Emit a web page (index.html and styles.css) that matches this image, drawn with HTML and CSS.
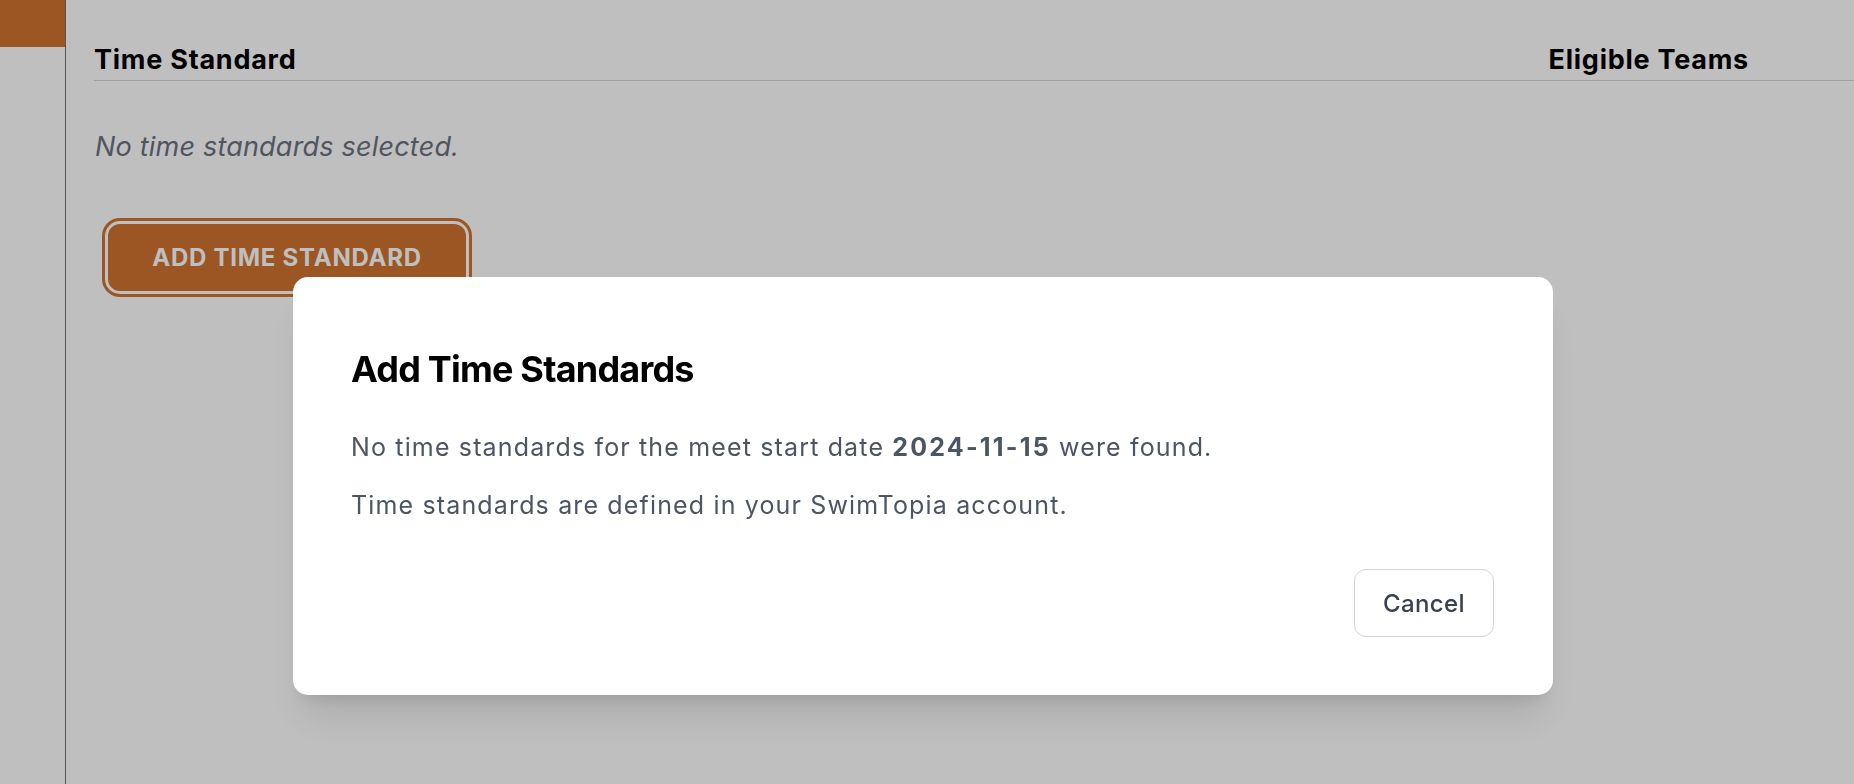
FILE: index.html
```html
<!DOCTYPE html>
<html lang="en">

<head>
  <meta charset="UTF-8">
  <meta name="viewport" content="width=device-width, initial-scale=1.0">
  <link rel="stylesheet" href="styles.css">
  <title>Time Standards</title>
</head>

<body>
  <div class="layout">
    <!-- Sidebar -->
    <aside class="sidebar">
      <div class="nav-active"></div>
    </aside>

    <!-- Main content -->
    <main class="content">
      <div class="table-head">
        <div class="th">Time Standard</div>
        <div class="th th-teams">Eligible Teams</div>
      </div>

      <p class="empty-note">No time standards selected.</p>

      <button type="button" class="add-btn">Add Time Standard</button>
    </main>
  </div>

  <!-- Modal -->
  <div class="backdrop">
    <div class="modal">
      <h2 class="modal-title">Add Time Standards</h2>
      <p class="modal-text">No time standards for the meet start date <b>2024-11-15</b> were found.</p>
      <p class="modal-text">Time standards are defined in your SwimTopia account.</p>
      <div class="modal-actions">
        <button type="button" class="cancel-btn">Cancel</button>
      </div>
    </div>
  </div>
</body>

</html>
```

FILE: styles.css
```css
body {
  font-family: Inter, "Noto Sans", sans-serif;
  background-color: #ffffff;
  margin: 0;
  padding: 0;
}

.layout {
  display: flex;
  min-height: 784px;
}

.sidebar {
  width: 65px;
  border-right: 1px solid #71717a;
  flex-shrink: 0;
}

.nav-active {
  height: 47px;
  background-color: #cf732f;
}

.content {
  flex: 1;
  padding-left: 28px;
}

.table-head {
  display: flex;
  justify-content: space-between;
  padding-top: 39px;
  border-bottom: 1px solid #d1d5db;
}

.th {
  font-size: 27px;
  font-weight: 700;
  line-height: 41px;
  letter-spacing: 0.75px;
  color: #000;
}

.th-teams {
  margin-right: 105px;
}

.empty-note {
  font-size: 27px;
  font-style: italic;
  line-height: 40px;
  letter-spacing: 0.2px;
  color: #6b7280;
  margin: 46px 0 0 1px;
}

.add-btn {
  display: block;
  margin: 57px 0 0 14px;
  padding: 0;
  height: 67px;
  width: 358px;
  font-family: inherit;
  font-size: 24px;
  font-weight: 700;
  letter-spacing: 0.75px;
  text-transform: uppercase;
  color: #ffffff;
  background-color: #cf732f;
  border: none;
  border-radius: 12px;
  box-shadow: 0 0 0 3px #ffffff, 0 0 0 6px #cf732f;
  cursor: pointer;
}

/* modal */
.backdrop {
  position: fixed;
  inset: 0;
  background-color: rgba(0, 0, 0, 0.25);
  display: flex;
  justify-content: center;
  align-items: flex-start;
  padding: 277px 8px 0 0;
}

.modal {
  width: 1260px;
  box-sizing: border-box;
  background-color: #ffffff;
  border-radius: 15px;
  padding: 68px 59px 58px 58px;
  box-shadow: 0 30px 38px -8px rgba(0, 0, 0, 0.1), 0 12px 15px -9px rgba(0, 0, 0, 0.1);
}

.modal-title {
  font-size: 36px;
  font-weight: 700;
  line-height: 48px;
  letter-spacing: -0.8px;
  color: #000;
  margin: 0 0 36px 0;
}

.modal-text {
  font-size: 25px;
  line-height: 36px;
  letter-spacing: 1.15px;
  color: #4b5563;
  margin: 0 0 22px 0;
}

.modal-text b {
  font-weight: 700;
  letter-spacing: 2.2px;
}

.modal-actions {
  display: flex;
  justify-content: flex-end;
  margin-top: 46px;
}

.cancel-btn {
  height: 68px;
  width: 140px;
  font-family: inherit;
  font-size: 24px;
  font-weight: 500;
  letter-spacing: 0.4px;
  color: #374151;
  background-color: #ffffff;
  border: 1px solid #d1d5db;
  border-radius: 12px;
  cursor: pointer;
}
```
